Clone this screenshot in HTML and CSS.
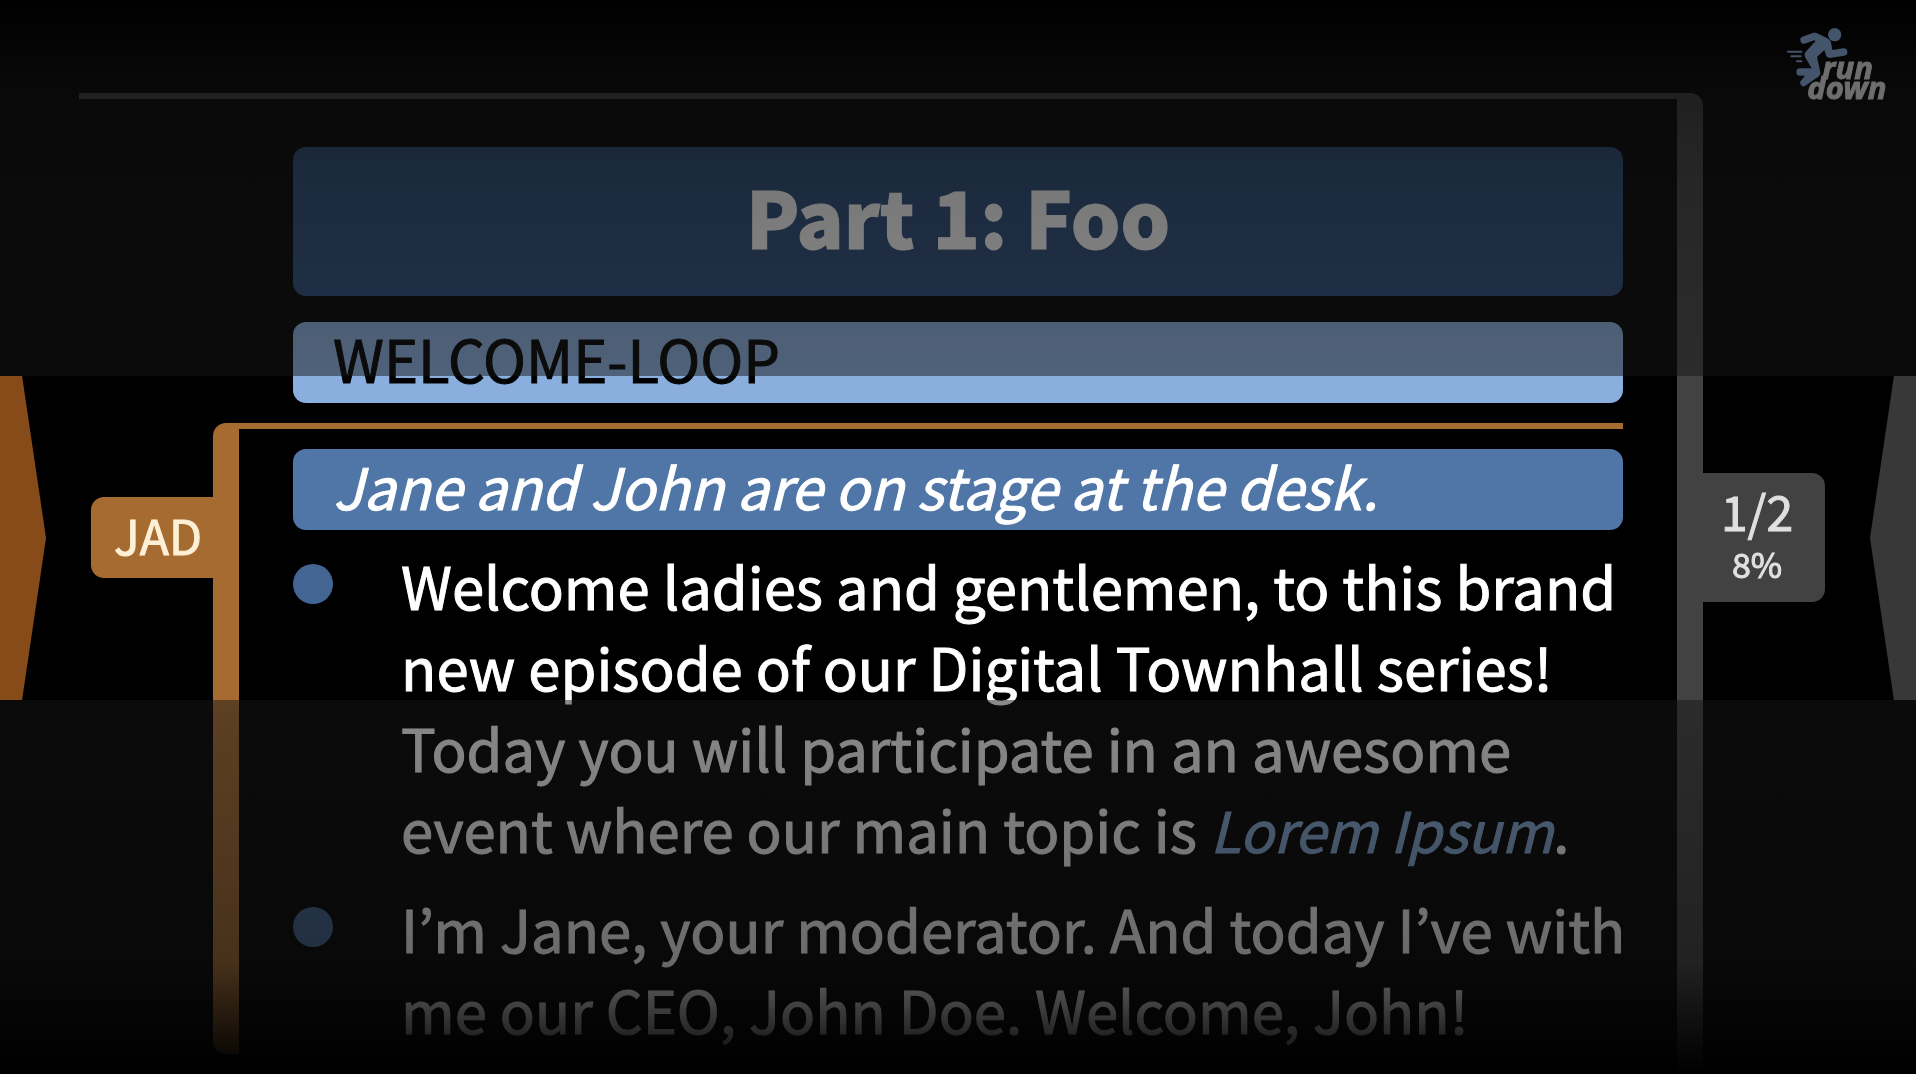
FILE: index.html
```html
<!DOCTYPE html>
<html lang="en">
<head>
  <meta charset="UTF-8">
  <meta name="viewport" content="width=device-width, initial-scale=1.0">
  <title>Rundown</title>
  <link rel="stylesheet" href="styles.css">
</head>
<body>
  <main class="prompter">
    <section class="part">
      <h1>Part 1: Foo</h1>
      <p class="cue">WELCOME-LOOP</p>

      <div class="speaker">
        <p class="stage">Jane and John are on stage at the desk.</p>
        <ul class="script">
          <li>Welcome ladies and gentlemen, to this brand new episode of our Digital Townhall series! Today you will participate in an awesome event where our main topic is <em>Lorem Ipsum</em>.</li>
          <li>I’m Jane, your moderator. And today I’ve with me our CEO, John Doe. Welcome, John!</li>
        </ul>
      </div>
    </section>
  </main>

  <!-- reading window -->
  <div class="overlay">
    <div class="shade shade-top"></div>
    <div class="window">
      <div class="arrow arrow-left"></div>
      <div class="label label-speaker">JAD</div>
      <div class="label label-progress">
        <span class="count">1/2</span>
        <span class="percent">8%</span>
      </div>
      <div class="arrow arrow-right"></div>
    </div>
    <div class="shade shade-bottom"></div>
  </div>

  <svg class="logo" viewBox="45 45 312 228" role="img" aria-label="rundown">
    <g class="logo-runner">
      <circle cx="194" cy="74" r="20"/>
      <path class="limb" d="M102 90 L134 79 L152 88"/>
      <path d="M128 69 Q136 67 144 71 L172 85 Q184 91 184 103 L187 120 L219 115 A11 11 0 0 1 223 137 L180 144 Q171 145 168 136 L163 120 L141 141 L151 187 Q153 194 147 199 L108 226 A10 10 0 0 1 94 211 L105 197 L90 197 A11 11 0 0 1 90 175 L125 175 L105 141 Q101 131 110 122 L136 94 Z"/>
      <path class="speed" d="M54 125 H94 M64 139 H92 M81 154 H94"/>
    </g>
    <text class="logo-text" x="157" y="206">run</text>
    <text class="logo-text" x="112" y="266">down</text>
  </svg>
</body>
</html>
```
FILE: styles.css
```css
* {
  box-sizing: border-box;
}

body {
  margin: 0;
  height: 100vh;
  overflow: hidden;
  background: #000;
  color: #fff;
  font-family: "Source Sans Pro", "Noto Sans CJK KR", sans-serif;
  font-size: 58px;
  line-height: 81px;
  -webkit-text-stroke-width: 1px;
}

h1, p, ul {
  margin: 0;
  padding: 0;
}

.prompter {
  padding: 93px 213px 0 79px;
}

.part {
  min-height: calc(100vh - 93px);
  padding: 48px 54px 0 214px;
  border-top: 6px solid #424242;
  border-right: 26px solid #424242;
  border-top-right-radius: 13px;
}

h1 {
  margin-bottom: 26px;
  padding: 28px 40px 40px;
  border-radius: 13px;
  background: #2b4c7a;
  font-size: 78px;
  font-weight: 900;
  text-align: center;
}

.cue, .stage {
  padding: 0 40px 9px;
  border-radius: 13px;
  line-height: 72px;
}

.cue {
  margin-bottom: 20px;
  background: #8aaedd;
  color: #000;
}

.speaker {
  margin-left: -80px;
  padding: 20px 0 4px 54px;
  border-top: 6px solid #a66b30;
  border-left: 26px solid #a66b30;
  border-radius: 13px 0 0 13px;
}

.stage {
  background: #4f76a6;
  font-size: 57px;
  font-style: italic;
}

.script {
  padding-top: 15px;
  list-style: none;
}

.script li {
  position: relative;
  margin-right: -12px;
  padding-left: 108px;
}

.script li + li {
  margin-top: 19px;
}

.script li::before {
  content: "";
  position: absolute;
  top: 19px;
  left: 0;
  width: 40px;
  height: 40px;
  border-radius: 50%;
  background: #426594;
}

.script em {
  color: #8aaedd;
  font-size: 56px;
  line-height: 1;
}

/* reading window and the dimmed areas around it */
.overlay {
  position: fixed;
  inset: 0;
  display: flex;
  flex-direction: column;
}

.shade-top {
  height: 35vh;
  background: linear-gradient(to bottom,
    rgba(0, 0, 0, 0.9),
    rgba(14, 14, 14, 0.65) 25%,
    rgba(18, 18, 18, 0.57) 50%,
    rgba(22, 22, 22, 0.5));
}

.shade-bottom {
  flex: 1;
  background: linear-gradient(to bottom,
    rgba(22, 22, 22, 0.5),
    rgba(14, 14, 14, 0.62) 70%,
    rgba(4, 4, 4, 0.85) 88%,
    #000);
}

.window {
  height: 324px;
  display: flex;
  justify-content: space-between;
  align-items: center;
}

.arrow {
  width: 46px;
  height: 100%;
}

.arrow-left {
  background: #874b19;
  clip-path: polygon(0 0, 48% 0, 100% 50%, 48% 100%, 0 100%);
}

.arrow-right {
  background: #383838;
  clip-path: polygon(52% 0, 100% 0, 100% 100%, 52% 100%, 0 50%);
}

.label {
  width: 122px;
  font-size: 48px;
  text-align: center;
}

.label-speaker {
  margin: 0 auto 0 45px;
  padding: 0 0 6px 12px;
  border-radius: 13px 0 0 13px;
  background: #a66b30;
  color: #fdf0d5;
  line-height: 75px;
}

.label-progress {
  margin-right: 45px;
  padding: 10px 14px 12px 0;
  border-radius: 0 13px 13px 0;
  background: #424242;
  color: #e0e0e0;
}

.count, .percent {
  display: block;
}

.count {
  line-height: 54px;
}

.percent {
  font-size: 34px;
  line-height: 53px;
}

.logo {
  position: fixed;
  top: 25px;
  right: 27px;
  width: 104px;
  height: 76px;
  overflow: visible;
}

.logo-runner {
  fill: #44546a;
  stroke: #44546a;
  stroke-width: 0;
}

.limb {
  fill: none;
  stroke-width: 22;
  stroke-linecap: round;
  stroke-linejoin: round;
}

.speed {
  stroke-width: 6;
  stroke-linecap: round;
}

.logo-text {
  fill: #6e6e6e;
  stroke: #6e6e6e;
  stroke-width: 3;
  font-family: "Noto Sans", "Open Sans", sans-serif;
  font-size: 93px;
  font-style: italic;
  font-weight: 700;
}
```
